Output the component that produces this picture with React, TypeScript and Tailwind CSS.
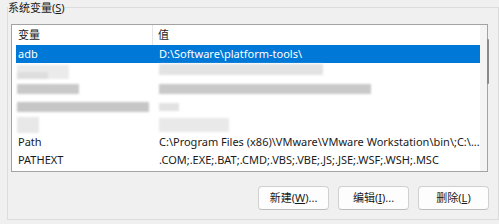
const font = { fontFamily: '"Noto Sans", "Noto Sans CJK SC", sans-serif' };

type Row = { name: string; value: string };

const rowsBottom: Row[] = [
  { name: "Path", value: "C:\\Program Files (x86)\\VMware\\VMware Workstation\\bin\\;C:\\..." },
  { name: "PATHEXT", value: ".COM;.EXE;.BAT;.CMD;.VBS;.VBE;.JS;.JSE;.WSF;.WSH;.MSC" },
];

// pixelated (censored) rows
const BlurRow = ({ left, right }: { left: React.ReactNode; right: React.ReactNode }) => (
  <div className="flex h-[17.75px] items-center">
    <div className="w-[142px] pl-[5px] h-full flex items-center">{left}</div>
    <div className="flex-1 pl-[5px] h-full flex items-center">{right}</div>
  </div>
);

const Btn = ({ label, hot, tail }: { label: string; hot: string; tail: string }) => (
  <button className="w-[71px] h-[24px] rounded-[4px] border border-[#d0d0d0] border-b-[#bdbdbd] bg-[#fdfdfd] text-[11px] text-[#1a1a1a] flex items-center justify-center">
    {label}(<span className="underline">{hot}</span>){tail}
  </button>
);

export default function App() {
  return (
    <div className="w-[499px] h-[224px] bg-[#f0f0f0] overflow-hidden text-[#1a1a1a]" style={font}>
      <fieldset className="ml-[7px] w-[492px] h-[220px] border border-[#dcdcdc] px-0 pt-0">
        <legend className="text-[11px] leading-[15px] px-0">
          系统变量(<span className="underline">S</span>)
        </legend>
        <div className="ml-[3px] mt-[9px] w-[477px] h-[148px] border border-[#a3a3a3] bg-white flex text-[11px]">
          <div className="flex-1 flex flex-col">
            {/* header */}
            <div className="h-[20px] flex items-center">
              <div className="w-[141px] pl-[6px] h-full flex items-center border-r border-[#e5e5e5]">变量</div>
              <div className="pl-[5px]">值</div>
            </div>
            <div className="pl-[4px]">
              <div className="h-[17.75px] bg-[#0078d7] text-white flex items-center">
                <div className="w-[142px] pl-[2px]">adb</div>
                <div className="pl-[1px]">D:\Software\platform-tools\</div>
              </div>
            </div>
            <div className="blur-[1.2px]">
              <BlurRow
                left={<div className="w-[52px] h-[14px] bg-[#ebebeb] flex items-end"><div className="w-[31px] h-[7px] bg-[#dedede]" /></div>}
                right={<div className="w-[164px] h-[11px] bg-[#e3e3e3] self-start mt-[1px]" />}
              />
              <BlurRow
                left={<div className="w-[62px] h-[10px] bg-[#c9c9c9]" />}
                right={<div className="w-[212px] h-[10px] bg-[#c9c9c9]" />}
              />
              <BlurRow
                left={<div className="w-[132px] h-[10px] bg-[#c6c6c6]" />}
                right={<div className="w-[20px] h-[8px] bg-[#e2e2e2]" />}
              />
              <BlurRow
                left={<div className="w-[22px] h-[16px] bg-[#e8e8e8]" />}
                right={<div className="w-[70px] h-[14px] bg-[#e9e9e9]" />}
              />
            </div>
            {rowsBottom.map((r) => (
              <div key={r.name} className="h-[17.75px] flex items-center pl-[4px]">
                <div className="w-[142px] pl-[2px]">{r.name}</div>
                <div className="pl-[1px] whitespace-nowrap">{r.value}</div>
              </div>
            ))}
          </div>
          {/* scrollbar */}
          <div className="w-[15px] bg-[#f4f4f4] relative">
            <div className="absolute left-[7px] top-[14px] w-[2px] h-[45px] rounded-full bg-[#8a8a8a]" />
          </div>
        </div>
        <div className="mt-[14px] pr-[9px] flex justify-end gap-[9px]">
          <Btn label="新建" hot="W" tail="..." />
          <Btn label="编辑" hot="I" tail="..." />
          <Btn label="删除" hot="L" tail="" />
        </div>
      </fieldset>
    </div>
  );
}
